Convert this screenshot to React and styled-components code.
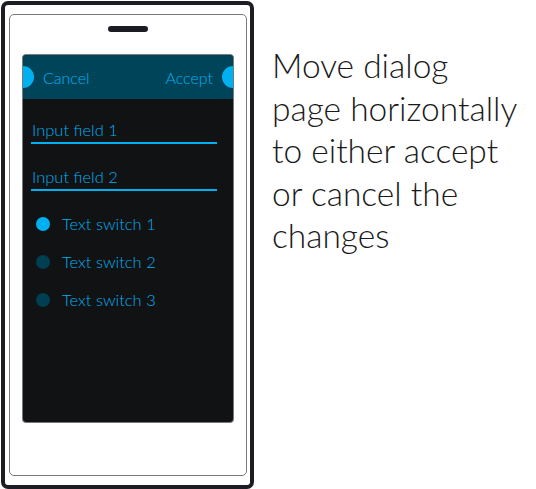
import React from 'react';
import styled, {createGlobalStyle} from 'styled-components';

const colors = {
  frame: '#1c1d24',
  bezel: '#7a7a7e',
  screen: '#111214',
  header: '#00445a',
  accent: '#00b0f0',
  dim: '#003e52',
  text: '#1a1a1a'
};

const GlobalStyle = createGlobalStyle`
  body {
    margin: 0;
    background: #fff;
    font-family: Lato, "Open Sans", sans-serif;
  }
`;

const switches = [
  {label: 'Text switch 1', on: true},
  {label: 'Text switch 2', on: false},
  {label: 'Text switch 3', on: false}
];

const captionLines = ['Move dialog', 'page horizontally', 'to either accept', 'or cancel the', 'changes'];

const App = () => (
  <Page>
    <GlobalStyle />
    <Phone>
      <Bezel>
        <Speaker />
        <Screen>
          <Header>
            <Handle $side="left" />
            <HeaderLabel>Cancel</HeaderLabel>
            <HeaderLabel>Accept</HeaderLabel>
            <Handle $side="right" />
          </Header>
          <Body>
            <Field>Input field 1</Field>
            <Field>Input field 2</Field>
            <Switches>
              {switches.map((s) => (
                <SwitchRow key={s.label}>
                  <Dot $on={s.on} />
                  {s.label}
                </SwitchRow>
              ))}
            </Switches>
          </Body>
        </Screen>
      </Bezel>
    </Phone>
    <Caption>
      {captionLines.map((line, i) => (
        <React.Fragment key={line}>
          {line}
          {i < captionLines.length - 1 && <br />}
        </React.Fragment>
      ))}
    </Caption>
  </Page>
);

const Page = styled.div`
  display: flex;
  align-items: flex-start;
  height: 489px;
  padding: 1px 0 0 1px;
  box-sizing: border-box;
`;

const Phone = styled.div`
  width: 253px;
  height: 488px;
  box-sizing: border-box;
  border: 4px solid ${colors.frame};
  border-radius: 7px;
  padding: 9px 3px 9px 4px;
  display: flex;
  flex-shrink: 0;
`;

const Bezel = styled.div`
  flex: 1;
  border: 1px solid ${colors.bezel};
  border-radius: 5px;
  display: flex;
  flex-direction: column;
  align-items: center;
`;

const Speaker = styled.div`
  width: 40px;
  height: 6px;
  border-radius: 3px;
  background: ${colors.frame};
  margin-top: 11px;
`;

const Screen = styled.div`
  margin-top: 22px;
  width: 212px;
  height: 369px;
  box-sizing: border-box;
  border: 1px solid ${colors.bezel};
  border-radius: 4px;
  background: ${colors.screen};
  overflow: hidden;
  display: flex;
  flex-direction: column;
`;

const Header = styled.div`
  position: relative;
  height: 44px;
  background: ${colors.header};
  display: flex;
  align-items: center;
  justify-content: space-between;
  padding: 0 20px;
`;

const Handle = styled.span`
  position: absolute;
  top: 11px;
  ${({$side}) => ($side === 'left' ? 'left: -11px;' : 'right: -11px;')}
  width: 22px;
  height: 22px;
  border-radius: 50%;
  background: ${colors.accent};
`;

const HeaderLabel = styled.span`
  color: ${colors.accent};
  font-size: 16px;
  font-weight: 300;
`;

const Body = styled.div`
  padding: 21px 16px 0 8px;
  display: flex;
  flex-direction: column;
  gap: 23px;
`;

const Field = styled.div`
  color: ${colors.accent};
  font-size: 16.5px;
  font-weight: 300;
  line-height: 20px;
  padding: 0 0 2px 1px;
  border-bottom: 2px solid ${colors.accent};
`;

const Switches = styled.div`
  display: flex;
  flex-direction: column;
  gap: 18px;
`;

const SwitchRow = styled.div`
  display: flex;
  align-items: center;
  gap: 12px;
  padding-left: 5px;
  height: 20px;
  color: ${colors.accent};
  font-size: 16.5px;
  font-weight: 300;
`;

const Dot = styled.span`
  width: 14px;
  height: 14px;
  border-radius: 50%;
  background: ${({$on}) => ($on ? colors.accent : colors.dim)};
`;

const Caption = styled.p`
  margin: 43px 0 0 18px;
  white-space: nowrap;
  font-size: 33.5px;
  font-weight: 300;
  line-height: 42.5px;
  color: ${colors.text};
`;

export default App;
